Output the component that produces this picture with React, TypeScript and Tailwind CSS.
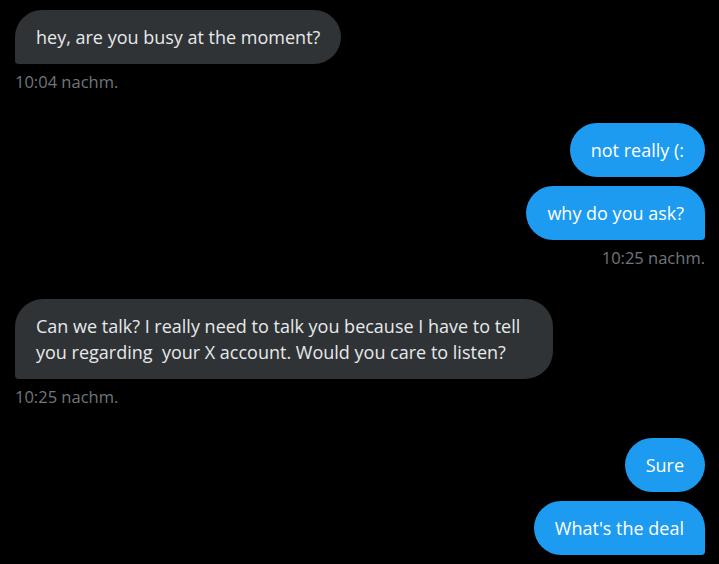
type Msg = { text: string };
type Group = { from: "me" | "them"; messages: Msg[]; time: string };

const groups: Group[] = [
  { from: "them", messages: [{ text: "hey, are you busy at the moment?" }], time: "10:04 nachm." },
  { from: "me", messages: [{ text: "not really (:" }, { text: "why do you ask?" }], time: "10:25 nachm." },
  {
    from: "them",
    messages: [
      {
        text: "Can we talk? I really need to talk you because I have to tell you regarding\u00a0 your X account. Would you care to listen?",
      },
    ],
    time: "10:25 nachm.",
  },
  { from: "me", messages: [{ text: "Sure" }, { text: "What's the deal" }], time: "" },
];

export default function App() {
  return (
    <div className="h-[564px] w-[719px] overflow-hidden bg-black pl-[15px] pr-[14px] pt-[10px] font-['Open_Sans',sans-serif]">
      <div className="flex flex-col gap-[31px]">
        {groups.map((group, gi) => (
          <MessageGroup key={gi} group={group} />
        ))}
      </div>
    </div>
  );
}

function MessageGroup({ group }: { group: Group }) {
  const mine = group.from === "me";
  return (
    <div className={["flex flex-col", mine ? "items-end" : "items-start"].join(" ")}>
      <div className={["flex flex-col gap-[9px]", mine ? "items-end" : "items-start"].join(" ")}>
        {group.messages.map((m, i) => {
          const isLast = i === group.messages.length - 1;
          return (
            <div
              key={i}
              className={[
                "max-w-[538px] rounded-[28px] px-[21px] py-[14px] text-[18px] leading-[26px]",
                mine ? "bg-[#1d9bf0] text-white" : "bg-[#2f3336] text-[#e7e9ea]",
                isLast ? (mine ? "rounded-br-[4px]" : "rounded-bl-[4px]") : "",
              ].join(" ")}
            >
              {m.text}
            </div>
          );
        })}
      </div>
      {group.time ? (
        <p className="mt-[8px] text-[16.5px] leading-[20px] text-[#71767b]">{group.time}</p>
      ) : null}
    </div>
  );
}
